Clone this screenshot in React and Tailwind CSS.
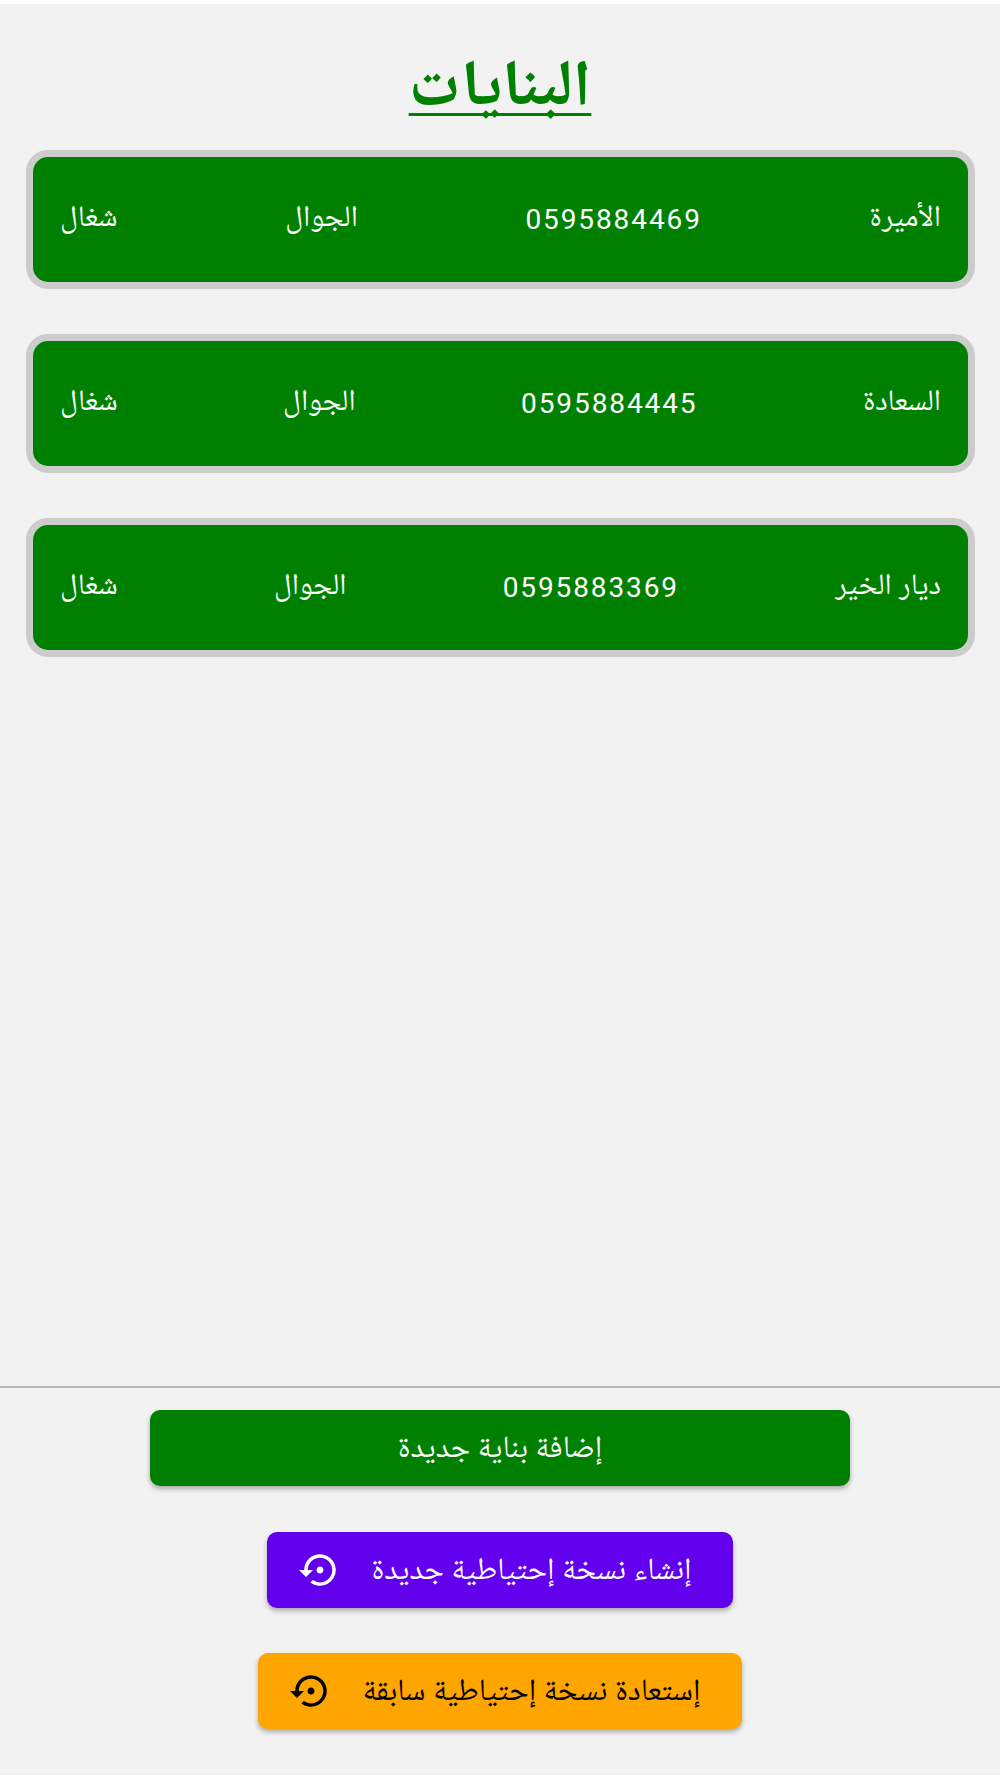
import React from "react";
import { MdSettingsBackupRestore } from "react-icons/md";

const rows = [
  ["الأميرة", "0595884469"],
  ["السعادة", "0595884445"],
  ["ديار الخير", "0595883369"],
];

export default function App() {
  return (
    <div dir="rtl" className="h-[1778px] bg-white pt-[4px] pb-[3px] font-['Roboto','Noto_Naskh_Arabic','DejaVu_Sans',sans-serif]">
      <div className="flex h-full flex-col bg-[#f2f2f2]">
        <h1 className="mt-[49px] self-center text-[65px] leading-[60px] font-bold text-[#008000] underline decoration-[3px] underline-offset-[8px] [text-decoration-skip-ink:none]">البنايات</h1>
        <div className="mt-[37px] flex flex-col gap-[45px] pr-[25px] pl-[26px]">
          {rows.map(([name, phone]) => (
            <div key={phone} className="flex h-[139px] items-center justify-between rounded-[22px] border-[7px] border-[#cccccc] bg-[#008000] pr-[27px] pl-[27px] text-[30px] text-white">
              <span className="pb-[7px] leading-[40px]">{name}</span>
              <span dir="ltr" className="text-[28px] tracking-[1.9px] leading-[40px]">{phone}</span>
              <span className="pb-[7px] leading-[40px]">الجوال</span>
              <span className="pb-[7px] leading-[40px]">شغال</span>
            </div>
          ))}
        </div>
        <div className="mt-auto flex flex-col items-center border-t-2 border-[#b4b4b4] pt-[22px] pb-[46px] text-[31px] leading-[40px]">
          <button className="flex h-[76px] w-[700px] items-center justify-center rounded-[10px] bg-[#008000] pb-[3px] text-white shadow-[0_3px_5px_rgba(0,0,0,0.3)]">إضافة بناية جديدة</button>
          <button className="mt-[46px] flex h-[76px] w-[466px] items-center justify-center gap-[31px] rounded-[10px] bg-[#6200ee] pr-[10px] text-white shadow-[0_3px_5px_rgba(0,0,0,0.3)]">
            <span className="pb-[3px]">إنشاء نسخة إحتياطية جديدة</span>
            <MdSettingsBackupRestore className="text-[42px]" />
          </button>
          <button className="mt-[45px] flex h-[76px] w-[484px] items-center justify-center gap-[31px] rounded-[10px] bg-[#ffa500] pr-[10px] text-black shadow-[0_3px_5px_rgba(0,0,0,0.3)]">
            <span className="pb-[3px]">إستعادة نسخة إحتياطية سابقة</span>
            <MdSettingsBackupRestore className="text-[42px]" />
          </button>
        </div>
      </div>
    </div>
  );
}
